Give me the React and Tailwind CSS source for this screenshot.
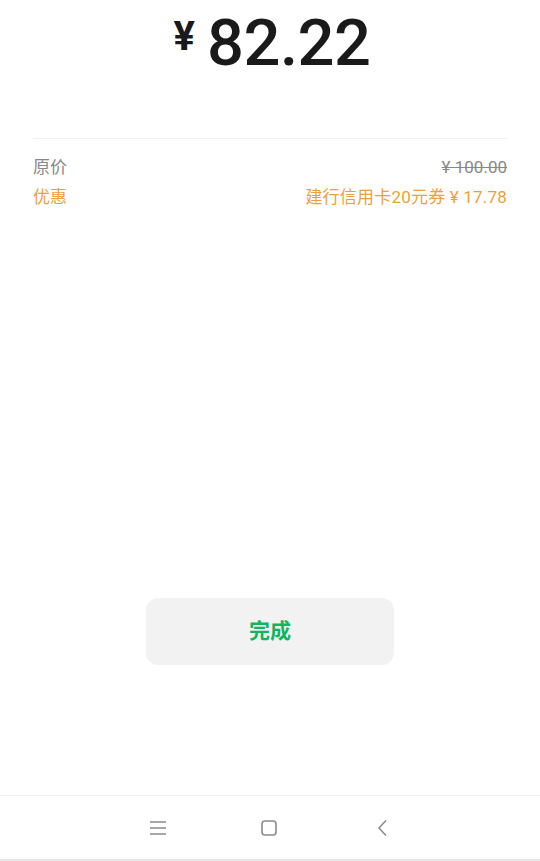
import React from 'react';

const NavBar = () => (
  <div className="h-[66px] border-t border-[#f0f0f0] border-b-[2px] border-b-[#e6e6e6] flex items-center justify-center bg-white">
    <div className="w-[30px] flex justify-center">
      <svg width="18" height="16" viewBox="0 0 18 16" fill="none" stroke="#8a8a8a" strokeWidth="1.4">
        <path d="M1 2h16M1 8h16M1 14h16" />
      </svg>
    </div>
    <div className="w-[30px] flex justify-center ml-[81px]">
      <svg width="18" height="18" viewBox="0 0 18 18" fill="none" stroke="#8a8a8a" strokeWidth="1.6">
        <rect x="2" y="2" width="14" height="14" rx="3" />
      </svg>
    </div>
    <div className="w-[30px] flex justify-center ml-[84px]">
      <svg width="14" height="18" viewBox="0 0 14 18" fill="none" stroke="#8a8a8a" strokeWidth="1.5">
        <path d="M10 1.5L3 9l7 7.5" />
      </svg>
    </div>
  </div>
);

export default function App() {
  return (
    <div className="w-[540px] h-[861px] bg-white flex flex-col font-['Roboto','Noto_Sans_CJK_SC',sans-serif]">
      <div className="flex-1 flex flex-col">
        <div className="flex justify-center items-start pt-[3px] pl-[4px] text-[#1a1a1a]">
          <span className="text-[40px] font-bold leading-none mt-[14px] mr-[12px]">¥</span>
          <span className="text-[65px] font-medium leading-[80px] tracking-[-0.5px]">82.22</span>
        </div>
        <div className="mx-[33px] mt-[55px] border-t border-[#f0f0f0]" />
        <div className="mx-[33px] mt-[14px] flex justify-between items-center text-[17px] leading-[29px] text-[#888]">
          <span>原价</span>
          <span className="line-through">¥ 100.00</span>
        </div>
        <div className="mx-[33px] mt-[1px] flex justify-between items-center text-[17px] leading-[29px] text-[#e9a23b]">
          <span>优惠</span>
          <span className="tracking-[0.2px]">建行信用卡20元券 ¥ 17.78</span>
        </div>
        <div className="flex-1" />
        <div className="flex justify-center mb-[130px]">
          <button className="w-[248px] h-[67px] rounded-[12px] bg-[#f2f2f2] text-[#13b45e] text-[21px] font-bold">
            完成
          </button>
        </div>
      </div>
      <NavBar />
    </div>
  );
}
